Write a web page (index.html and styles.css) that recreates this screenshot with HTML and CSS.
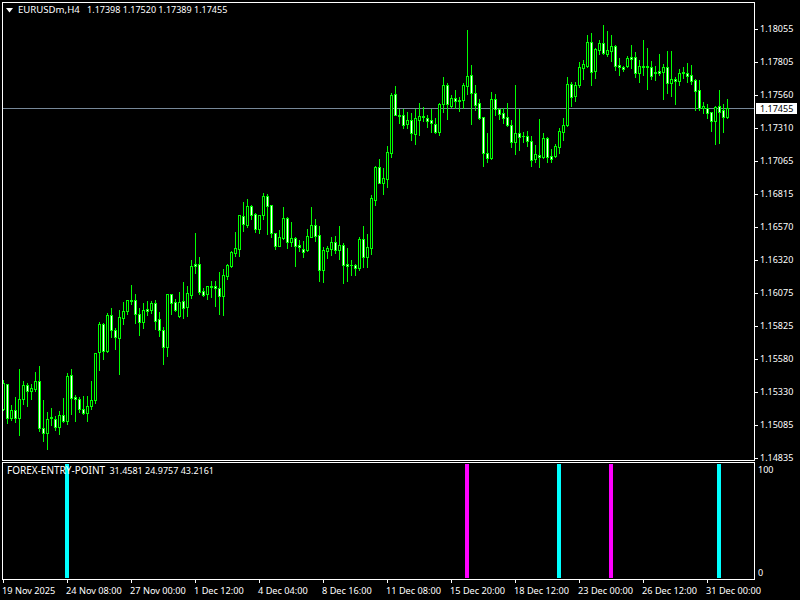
FILE: index.html
```html
<!DOCTYPE html>
<html lang="en">
<head>
<meta charset="utf-8">
<title>EURUSDm,H4</title>
<link rel="stylesheet" href="styles.css">
</head>
<body>
<div class="terminal">
  <section class="row row-main">
    <div class="pane pane-main">
      <svg id="candles" class="plot" width="751" height="457" viewBox="3 3 751 457" shape-rendering="crispEdges" aria-hidden="true"></svg>
      <div class="legend legend-main">
        <svg class="arrow" width="7" height="5" viewBox="0 0 7 5"><path d="M0 0H7L3.5 4.5Z" fill="#fff"/></svg>
        <span><span class="name">EURUSDm,H4</span> 1.17398 1.17520 1.17389 1.17455</span>
      </div>
    </div>
    <div class="price-axis">
      <span class="price">1.18055</span>
      <span class="price">1.17805</span>
      <span class="price">1.17560</span>
      <span class="price">1.17310</span>
      <span class="price">1.17065</span>
      <span class="price">1.16815</span>
      <span class="price">1.16570</span>
      <span class="price">1.16320</span>
      <span class="price">1.16075</span>
      <span class="price">1.15825</span>
      <span class="price">1.15580</span>
      <span class="price">1.15330</span>
      <span class="price">1.15085</span>
      <span class="price">1.14835</span>
      <span class="price-current">1.17455</span>
    </div>
  </section>
  <section class="row row-ind">
    <div class="pane pane-ind">
      <i class="signal signal-a"></i>
      <i class="signal signal-b"></i>
      <i class="signal signal-c"></i>
      <i class="signal signal-d"></i>
      <i class="signal signal-e"></i>
      <div class="legend legend-ind"><span class="name">FOREX-ENTRY-POINT</span> 31.4581 24.9757 43.2161</div>
    </div>
    <div class="scale-axis">
      <span class="scale">100</span>
      <span class="scale">0</span>
    </div>
  </section>
  <footer class="time-axis">
    <span class="time">19 Nov 2025</span>
    <span class="time">24 Nov 08:00</span>
    <span class="time">27 Nov 00:00</span>
    <span class="time">1 Dec 12:00</span>
    <span class="time">4 Dec 04:00</span>
    <span class="time">8 Dec 16:00</span>
    <span class="time">11 Dec 08:00</span>
    <span class="time">15 Dec 20:00</span>
    <span class="time">18 Dec 12:00</span>
    <span class="time">23 Dec 00:00</span>
    <span class="time">26 Dec 12:00</span>
    <span class="time">31 Dec 00:00</span>
  </footer>
</div>
<script src="chart.js"></script>
</body>
</html>
```
FILE: styles.css
```css
* { box-sizing: border-box; }
html, body { margin: 0; background: #000; }
body {
  width: 800px;
  height: 600px;
  overflow: hidden;
  color: #fff;
  font: 9px/11px "Noto Sans", "DejaVu Sans", sans-serif;
}
.terminal {
  display: flex;
  flex-direction: column;
  width: 800px;
  height: 600px;
  padding: 2px 0 0 2px;
}
.row { display: flex; }
.row-main { height: 459px; }
.row-ind { height: 118px; margin-top: 1px; }
.pane {
  position: relative;
  width: 753px;
  border: 1px solid #fff;
  background: #000;
}
.plot { position: absolute; left: 0; top: 0; display: block; }
.legend { position: absolute; white-space: pre; z-index: 2; }
.legend-main {
  left: 3px;
  top: 1px;
  display: flex;
  align-items: center;
  gap: 5px;
}
.legend-main .name { font-size: 9.6px; margin-right: 5px; }
.legend-ind .name { font-size: 10px; margin-right: 2px; }
.arrow { display: block; margin-top: 1px; }
.legend-ind { left: 4px; top: 2px; }
.signal {
  position: absolute;
  top: 1px;
  bottom: 1px;
  width: 4px;
}
.signal-a { left: 62px; background: #0ff; }
.signal-b { left: 462px; background: #f0f; }
.signal-c { left: 554px; background: #0ff; }
.signal-d { left: 606px; background: #f0f; }
.signal-e { left: 714px; background: #0ff; }

.price-axis {
  position: relative;
  display: flex;
  flex-direction: column;
  flex: 1;
  padding-top: 21px;
}
.price {
  position: relative;
  display: block;
  height: 11px;
  line-height: 11px;
  margin-bottom: 22px;
  padding-left: 5px;
}
.price::before {
  content: "";
  position: absolute;
  left: 0;
  top: 6px;
  width: 3px;
  height: 1px;
  background: #fff;
}
.price-current {
  position: absolute;
  left: 1px;
  top: 101px;
  width: 41px;
  height: 11px;
  line-height: 11px;
  padding-left: 4px;
  background: #fff;
  color: #000;
}
.scale-axis {
  display: flex;
  flex-direction: column;
  justify-content: space-between;
  flex: 1;
  padding: 2px 0 2px 3px;
}
.scale { display: block; line-height: 11px; }
.time-axis {
  display: flex;
  padding-left: 0;
}
.time {
  position: relative;
  display: block;
  width: 64px;
  flex: none;
  padding-top: 5px;
  font-size: 9.2px;
  line-height: 11px;
  white-space: nowrap;
}
.time::before {
  content: "";
  position: absolute;
  left: 1px;
  top: 0;
  width: 1px;
  height: 3px;
  background: #fff;
}
```
FILE: chart.js
```js
// high, body top, body bottom, low, fill (1 = white body, 0 = black body); one candle every 4px from x=3
var data = [
[380,383,409,410,0],[384,384,418,423,1],[405,410,418,420,0],[397,410,418,422,1],[369,399,418,435,0],[381,385,399,404,0],
[383,385,391,406,1],[384,388,391,399,0],[372,381,389,391,0],[366,381,428,431,1],[400,428,433,441,1],[412,419,433,449,0],
[408,417,418,425,1],[416,419,427,430,1],[411,415,427,434,0],[398,415,421,422,1],[373,376,421,424,0],[369,375,398,414,1],
[395,397,399,421,1],[397,399,409,412,1],[396,409,413,414,1],[396,406,413,421,0],[381,400,406,409,0],[353,353,400,403,0],
[322,324,352,370,0],[323,324,351,359,1],[313,315,351,352,0],[308,315,330,337,1],[328,330,337,349,1],[310,317,338,374,0],
[302,311,318,324,0],[300,300,311,314,0],[285,300,301,304,1],[294,300,314,323,1],[308,314,322,335,1],[303,310,322,328,0],
[301,309,311,315,1],[301,303,310,313,0],[300,303,321,329,1],[312,319,330,336,1],[327,330,347,364,1],[294,294,347,356,0],
[294,294,303,314,1],[299,302,310,311,1],[292,302,316,317,0],[282,301,308,318,1],[286,293,307,316,0],[260,266,295,298,0],
[233,264,266,273,1],[257,264,292,294,1],[288,291,295,296,1],[286,286,294,299,0],[281,286,287,297,1],[281,286,288,306,1],
[272,288,296,314,1],[269,275,296,315,0],[264,265,276,279,0],[251,252,266,267,0],[232,248,253,256,0],[215,215,249,256,0],
[202,216,224,231,1],[199,206,225,227,0],[205,206,215,219,1],[213,214,229,232,1],[215,215,229,233,0],[193,196,215,219,0],
[194,196,206,234,1],[205,205,233,237,1],[233,233,246,249,1],[230,237,246,246,0],[207,218,238,239,0],[217,218,242,248,1],
[222,238,242,246,0],[237,238,246,266,1],[240,245,247,251,1],[241,249,252,257,1],[229,236,250,251,0],[207,225,237,237,0],
[219,225,236,241,1],[226,235,270,281,1],[247,250,270,282,0],[246,248,251,258,0],[237,242,249,255,0],[236,242,250,253,1],
[226,245,250,259,0],[243,245,265,283,1],[248,264,266,281,1],[260,265,265,275,1],[264,265,268,275,1],[237,239,268,270,0],
[226,239,257,267,1],[234,247,257,267,0],[195,198,248,254,0],[166,167,200,205,0],[159,167,183,183,1],[168,178,183,194,0],
[146,152,179,187,0],[93,95,153,157,0],[86,94,115,115,1],[109,115,116,123,1],[109,115,125,128,1],[112,120,124,128,0],
[113,120,133,140,1],[109,118,134,144,0],[103,116,120,135,0],[107,116,117,121,1],[115,118,121,127,1],[109,120,123,132,1],
[118,124,132,133,1],[103,104,132,135,0],[77,85,104,112,0],[83,85,104,119,1],[95,98,106,107,0],[90,98,101,108,1],
[97,100,101,111,1],[83,85,100,108,0],[30,76,86,94,0],[65,75,93,124,1],[85,93,105,110,1],[99,103,118,119,1],
[117,117,153,166,1],[133,153,158,162,1],[92,99,158,159,0],[94,99,109,115,1],[108,109,114,119,1],[108,113,118,123,1],
[103,117,125,126,1],[120,125,142,147,1],[85,133,142,154,0],[109,133,137,150,1],[132,136,136,142,1],[131,136,141,146,1],
[136,141,160,166,1],[145,154,159,162,0],[119,155,157,167,1],[133,138,157,158,0],[137,138,157,162,1],[149,156,159,162,1],
[144,146,156,157,0],[128,131,147,153,0],[118,125,132,140,0],[77,84,125,126,0],[82,84,97,106,1],[82,85,96,101,0],
[62,67,85,87,0],[60,64,68,79,0],[35,42,66,67,0],[33,42,72,85,1],[48,49,71,78,0],[40,43,50,54,0],
[25,43,53,54,1],[31,50,54,56,0],[35,46,51,61,0],[45,46,66,70,1],[58,65,67,75,1],[66,67,69,71,1],
[56,58,66,67,0],[45,57,59,68,1],[52,57,73,77,1],[60,66,73,82,0],[40,66,67,75,1],[48,66,67,89,1],
[61,67,76,79,1],[66,72,73,80,1],[54,71,73,75,1],[64,67,72,99,0],[51,67,83,93,1],[51,79,83,96,0],
[77,79,81,104,1],[69,73,81,85,0],[67,72,73,78,1],[63,73,76,82,1],[65,75,81,84,1],[79,80,91,110,1],
[80,90,108,110,1],[102,106,108,113,0],[104,108,113,118,1],[112,112,121,131,1],[106,107,121,144,0],[90,106,112,143,1],
[104,110,117,132,1],[99,108,117,118,0]
];
var NS = "http://www.w3.org/2000/svg";
var svg = document.getElementById("candles");
function rect(x, y, w, h, fill) {
  var r = document.createElementNS(NS, "rect");
  r.setAttribute("x", x); r.setAttribute("y", y);
  r.setAttribute("width", w); r.setAttribute("height", h);
  r.setAttribute("fill", fill);
  svg.appendChild(r);
}
rect(3, 108, 751, 1, "#778899");
data.forEach(function (c, i) {
  var x = 3 + i * 4;
  rect(x, c[0], 1, c[3] - c[0] + 1, "#00ff00");
  rect(x - 1, c[1], 3, c[2] - c[1] + 1, "#00ff00");
  if (c[2] - c[1] > 1) {
    rect(x, c[1] + 1, 1, c[2] - c[1] - 1, c[4] ? "#ffffff" : "#000000");
  }
});
```
